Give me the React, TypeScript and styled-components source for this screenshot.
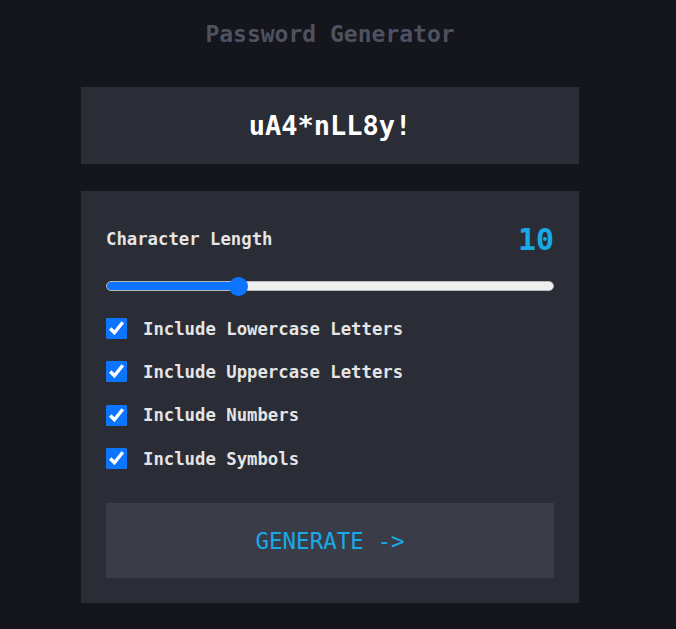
import React, { useState } from 'react';
import styled, { createGlobalStyle } from 'styled-components';

const GlobalStyle = createGlobalStyle`
  html, body {
    margin: 0;
    padding: 0;
    background: #14151d;
  }
  body {
    font-family: "DejaVu Sans Mono", "Liberation Mono", monospace;
  }
`;

const Page = styled.div`
  min-height: 629px;
  display: flex;
  flex-direction: column;
  align-items: center;
  padding-right: 16px;
  box-sizing: border-box;
`;

const Title = styled.h1`
  margin: 20px 0 39px;
  font-size: 23px;
  line-height: 28px;
  font-weight: bold;
  color: #4e5160;
`;

const Column = styled.div`
  width: 498px;
  display: flex;
  flex-direction: column;
  gap: 27px;
`;

const PasswordBox = styled.div`
  height: 77px;
  background: #2a2d36;
  display: flex;
  align-items: center;
  justify-content: center;
  color: #ffffff;
  font-size: 27px;
  font-weight: bold;
`;

const Panel = styled.div`
  background: #2a2d36;
  padding: 30px 25px 25px;
  display: flex;
  flex-direction: column;
`;

const LengthRow = styled.div`
  height: 36px;
  display: flex;
  align-items: center;
  justify-content: space-between;
`;

const Label = styled.span`
  color: #e4e4e4;
  font-size: 17.3px;
  font-weight: bold;
`;

const Count = styled.span`
  color: #18a9e6;
  font-size: 30px;
  font-weight: bold;
`;

const Slider = styled.input`
  -webkit-appearance: none;
  appearance: none;
  margin: 19px 0 0;
  width: 100%;
  height: 20px;
  background: transparent;
  outline: none;

  &::-webkit-slider-runnable-track {
    height: 10px;
    border-radius: 5px;
    border: 1px solid #b9b9bd;
    box-sizing: border-box;
    background: var(--track);
  }

  &::-webkit-slider-thumb {
    -webkit-appearance: none;
    width: 19px;
    height: 19px;
    border-radius: 50%;
    background: #0b75ff;
    margin-top: -5.5px;
    border: none;
  }
`;

const Options = styled.div`
  margin-top: 22px;
  display: flex;
  flex-direction: column;
  gap: 22.4px;
`;

const Option = styled.label`
  height: 21px;
  display: flex;
  align-items: center;
  gap: 16px;
  cursor: pointer;
`;

const Check = styled.input`
  width: 21px;
  height: 21px;
  margin: 0;
  accent-color: #0b75ff;
`;

const GenerateButton = styled.button`
  margin-top: 34px;
  height: 75px;
  border: none;
  background: #3a3d47;
  color: #18a9e6;
  font-family: "DejaVu Sans Mono", "Liberation Mono", monospace;
  font-size: 22.5px;
  cursor: pointer;
`;

const OPTIONS = [
  'Include Lowercase Letters',
  'Include Uppercase Letters',
  'Include Numbers',
  'Include Symbols',
];

const MIN = 6;
const MAX = 20;

export default function App() {
  const [length, setLength] = useState(10);
  const [checked, setChecked] = useState<boolean[]>([true, true, true, true]);

  const pct = ((length - MIN) / (MAX - MIN)) * 100;
  const track = `linear-gradient(to right, #0b75ff 0%, #0b75ff ${pct}%, #efefef ${pct}%, #efefef 100%)`;

  return (
    <>
      <GlobalStyle />
      <Page>
        <Title>Password Generator</Title>
        <Column>
          <PasswordBox>uA4*nLL8y!</PasswordBox>
          <Panel>
            <LengthRow>
              <Label>Character Length</Label>
              <Count>{length}</Count>
            </LengthRow>
            <Slider
              type="range"
              min={MIN}
              max={MAX}
              value={length}
              onChange={(e) => setLength(Number(e.target.value))}
              style={{ ['--track' as string]: track } as React.CSSProperties}
            />
            <Options>
              {OPTIONS.map((text, i) => (
                <Option key={text}>
                  <Check
                    type="checkbox"
                    checked={checked[i]}
                    onChange={() =>
                      setChecked((prev) => prev.map((v, j) => (j === i ? !v : v)))
                    }
                  />
                  <Label>{text}</Label>
                </Option>
              ))}
            </Options>
            <GenerateButton>GENERATE -&gt;</GenerateButton>
          </Panel>
        </Column>
      </Page>
    </>
  );
}
